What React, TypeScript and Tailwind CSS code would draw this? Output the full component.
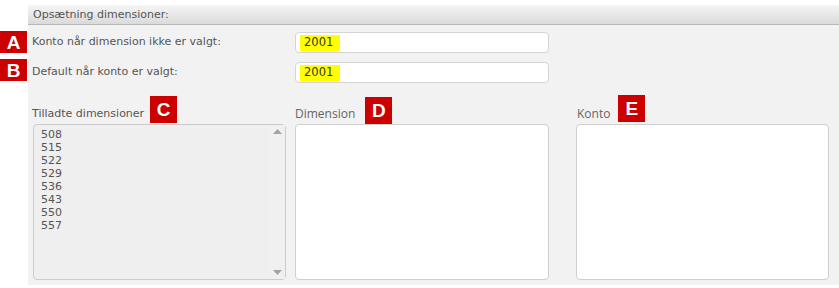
import React from "react";

const labelFont = { fontFamily: '"DejaVu Sans", Verdana, sans-serif' };

function Badge({ letter, className = "" }: { letter: string; className?: string }) {
  return (
    <span
      className={`flex items-center justify-center bg-[#cc0000] text-white font-bold text-[19px] leading-none ${className}`}
      style={{ fontFamily: '"Liberation Sans", Arial, sans-serif' }}
    >
      {letter}
    </span>
  );
}

const dims = ["508", "515", "522", "529", "536", "543", "550", "557"];

export default function App() {
  return (
    <div className="w-[839px] h-[288px] bg-white pt-[5px] pl-[28px] overflow-hidden" style={labelFont}>
      <div className="h-[280px] bg-[#f2f2f2] rounded-tl-[3px]">
        {/* Header */}
        <div className="h-[20px] pl-[5px] pt-[1px] flex items-center text-[11px] text-[#555] rounded-tl-[3px] border-b border-[#b9b9b9] bg-gradient-to-b from-[#f6f6f6] to-[#dadada]">
          Opsætning dimensioner:
        </div>

        {/* Rows A/B */}
        <div className="mt-[7px] flex flex-col gap-[9px]">
          <div className="relative flex items-center h-[21px]">
            <Badge letter="A" className="absolute left-[-28px] top-[-1px] w-[27px] h-[22px]" />
            <span className="w-[267px] pl-[4px] text-[11px] text-[#555]">Konto når dimension ikke er valgt:</span>
            <div className="w-[254px] h-[21px] bg-white border border-[#d4d4d4] rounded-[4px] flex items-center pl-[4px]">
              <span className="bg-[#ffff00] px-[4px] w-[40px] h-[16px] flex items-center text-[11.5px] text-[#333]">2001</span>
            </div>
          </div>
          <div className="relative flex items-center h-[21px]">
            <Badge letter="B" className="absolute left-[-28px] top-[-3px] w-[27px] h-[22px]" />
            <span className="w-[267px] pl-[4px] text-[11px] text-[#555]">Default når konto er valgt:</span>
            <div className="w-[254px] h-[21px] bg-white border border-[#d4d4d4] rounded-[4px] flex items-center pl-[4px]">
              <span className="bg-[#ffff00] px-[4px] w-[40px] h-[16px] flex items-center text-[11.5px] text-[#333]">2001</span>
            </div>
          </div>
        </div>

        {/* Lists */}
        <div className="mt-[10px] flex">
          <div className="w-[258px] pl-[4px]">
            <div className="h-[31px] flex items-end pb-[3px]">
              <span className="text-[11px] text-[#555] mb-[-1px]">Tilladte dimensioner</span>
              <Badge letter="C" className="ml-[6px] mb-[-2px] w-[27px] h-[27px]" />
            </div>
            <div className="ml-[1px] w-[253px] h-[156px] bg-[#efefef] border border-[#cbcbcb] rounded-[4px] flex">
              <div className="flex-1 pl-[7px] pt-[3px] text-[11px] leading-[13px] text-[#555]">
                {dims.map((d) => (
                  <div key={d}>{d}</div>
                ))}
              </div>
              <div className="w-[16px] flex flex-col justify-between items-center py-[4px] bg-[#f0f0f0]">
                <svg width="9" height="5" viewBox="0 0 9 5"><path d="M0 5 L4.5 0 L9 5 Z" fill="#a3a3a3" /></svg>
                <svg width="9" height="5" viewBox="0 0 9 5"><path d="M0 0 L9 0 L4.5 5 Z" fill="#a3a3a3" /></svg>
              </div>
            </div>
          </div>

          <div className="ml-[9px] w-[254px]">
            <div className="h-[31px] flex items-end pb-[3px]">
              <span className="text-[12px] text-[#666] mb-[-2px]" style={{ fontFamily: '"Open Sans", "Noto Sans", sans-serif' }}>Dimension</span>
              <Badge letter="D" className="ml-[10px] mb-[-3px] w-[27px] h-[27px]" />
            </div>
            <div className="w-[254px] h-[156px] bg-white border border-[#cfcfcf] rounded-[4px]" />
          </div>

          <div className="ml-[27px] w-[253px]">
            <div className="h-[31px] flex items-end pb-[3px]">
              <span className="ml-[1px] text-[12px] text-[#666] mb-[-2px]" style={{ fontFamily: '"Open Sans", "Noto Sans", sans-serif' }}>Konto</span>
              <Badge letter="E" className="ml-[8px] mb-[-1px] w-[27px] h-[27px]" />
            </div>
            <div className="w-[253px] h-[156px] bg-white border border-[#cfcfcf] rounded-[4px]" />
          </div>
        </div>
      </div>
    </div>
  );
}
